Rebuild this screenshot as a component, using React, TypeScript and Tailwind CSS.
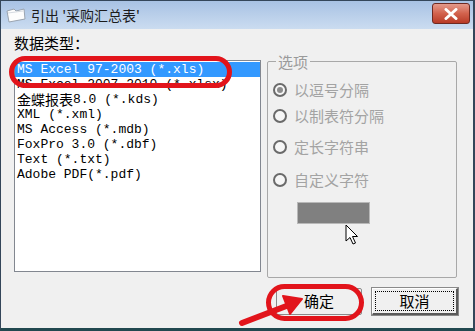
import React from "react";

const listItems = [
  { label: "MS Excel 97-2003 (*.xls)", selected: true },
  { label: "MS Excel 2007-2010 (*.xlsx)" },
  { cjk: "金蝶报表", label: "8.0 (*.kds)" },
  { label: "XML (*.xml)" },
  { label: "MS Access (*.mdb)" },
  { label: "FoxPro 3.0 (*.dbf)" },
  { label: "Text (*.txt)" },
  { label: "Adobe PDF(*.pdf)" },
];

const options = [
  { label: "以逗号分隔", checked: true, mt: "mt-[13px]" },
  { label: "以制表符分隔", mt: "mt-[10px]" },
  { label: "定长字符串", mt: "mt-[15px]" },
  { label: "自定义字符", mt: "mt-[17px]" },
];

const cjkFont = "font-['Noto_Sans_CJK_SC',sans-serif]";

function Radio({ checked }: { checked?: boolean }) {
  return (
    <span className="w-[14px] h-[14px] rounded-full border-2 border-[#6a6a6a] bg-[#f6f6f6] flex items-center justify-center shrink-0">
      {checked && <span className="w-[6px] h-[6px] rounded-full bg-[#8c8c8c]" />}
    </span>
  );
}

export default function App() {
  return (
    <div className="relative w-[475px] h-[331px] overflow-hidden flex flex-col bg-[#f0f0f0] border-l border-t border-[#34465a] border-r-2 border-b-[3px] border-b-[#21484f]">
      {/* title bar */}
      <div className="h-[28px] shrink-0 flex items-center bg-gradient-to-b from-[#a8c2e4] to-[#cbdcf0]">
        <svg width="22" height="16" viewBox="0 0 22 16" className="ml-[4px]">
          <path d="M2 4 L9 2 L11 4 L19 2 L20 12 L4 15 Z" fill="#fdfdfd" stroke="#9aa4b0" strokeWidth="1" />
          <path d="M3 6 L18 4" stroke="#d6dbe2" strokeWidth="1" />
        </svg>
        <span className={`ml-[4px] text-[14px] leading-[16px] text-[#1b1b1b] ${cjkFont}`}>
          引出 '采购汇总表'
        </span>
        <button className="ml-auto mr-[3px] mb-[3px] w-[38px] h-[21px] rounded-[3px] border border-[#6e2a22] bg-gradient-to-b from-[#e49a8c] via-[#d2624d] to-[#b83a26] flex items-center justify-center">
          <svg width="14" height="12" viewBox="0 0 14 12">
            <path d="M2 1.5 L12 10.5 M12 1.5 L2 10.5" stroke="#ffffff" strokeWidth="3" strokeLinecap="round" />
          </svg>
        </button>
      </div>

      {/* body */}
      <div className="flex flex-1 pl-[13px]">
        <div className="w-[247px] flex flex-col">
          <div className={`mt-[6px] h-[25px] text-[15px] leading-[15px] text-black ${cjkFont}`}>数据类型：</div>
          <div className="h-[212px] bg-white border border-[#828790] pt-[1px] font-['Liberation_Mono',monospace] text-[13px] leading-[15px] text-black">
            {listItems.map((item) => (
              <div
                key={item.label}
                className={`h-[15px] pl-[2px] flex items-center whitespace-pre ${item.selected ? "bg-[#3399ff] text-white" : ""}`}
              >
                {item.cjk && <span className={`text-[14px] leading-[15px] ${cjkFont}`}>{item.cjk}</span>}
                <span>{item.label}</span>
              </div>
            ))}
          </div>
        </div>

        <div className="ml-[6px] w-[191px] flex flex-col">
          <fieldset className="mt-[25px] h-[224px] w-[190px] border border-[#a8a8a8] rounded-[2px]">
            <legend className={`ml-[8px] px-[2px] text-[15px] leading-[15px] text-[#9a9a9a] ${cjkFont}`}>选项</legend>
            <div className="flex flex-col">
              {options.map((o) => (
                <div key={o.label} className={`flex items-center h-[16px] pl-[5px] gap-[7px] ${o.mt}`}>
                  <Radio checked={o.checked} />
                  <span className={`text-[15px] leading-[16px] text-[#a3a3a3] ${cjkFont}`}>{o.label}</span>
                </div>
              ))}
              <div className="mt-[14px] ml-[29px] w-[73px] h-[22px] bg-[#808080] border border-[#b8b8b8]" />
            </div>
          </fieldset>

          <div className="mt-[10px] flex">
            <button className={`ml-[9px] w-[86px] h-[27px] border border-[#8a8a8a] rounded-[2px] bg-[#f0f0f0] text-[15px] text-black ${cjkFont}`}>
              确定
            </button>
            <button className={`ml-[10px] w-[86px] h-[27px] border border-[#ffffff] border-r-[#5a5a5a] border-b-[#5a5a5a] border-r-2 border-b-2 outline outline-1 outline-[#8a8a8a] bg-[#f0f0f0] p-[2px] text-[15px] text-black ${cjkFont}`}>
              <span className="flex items-center justify-center w-full h-full border border-dotted border-black">取消</span>
            </button>
          </div>
        </div>
      </div>

      {/* annotations */}
      <div className="absolute left-[8px] top-[55px] w-[223px] h-[32px] rounded-full border-[5px] border-[#e2141b] pointer-events-none" />
      <div className="absolute left-[265px] top-[283px] w-[98px] h-[37px] rounded-full border-[5px] border-[#e2141b] pointer-events-none" />
      <svg className="absolute left-0 top-0 pointer-events-none" width="475" height="331" viewBox="0 0 475 331">
        <line x1="241" y1="322" x2="288" y2="304" stroke="#e2141b" strokeWidth="6" strokeLinecap="round" />
        <polygon points="301,298 289,313 282,295" fill="#e2141b" stroke="#e2141b" strokeWidth="2" strokeLinejoin="round" />
        <path d="M345 224 L345 240 L349 236.5 L352 243 L354.5 242 L351.5 235.5 L356.5 235.5 Z" fill="#ffffff" stroke="#000000" strokeWidth="1" strokeLinejoin="round" />
      </svg>
    </div>
  );
}
